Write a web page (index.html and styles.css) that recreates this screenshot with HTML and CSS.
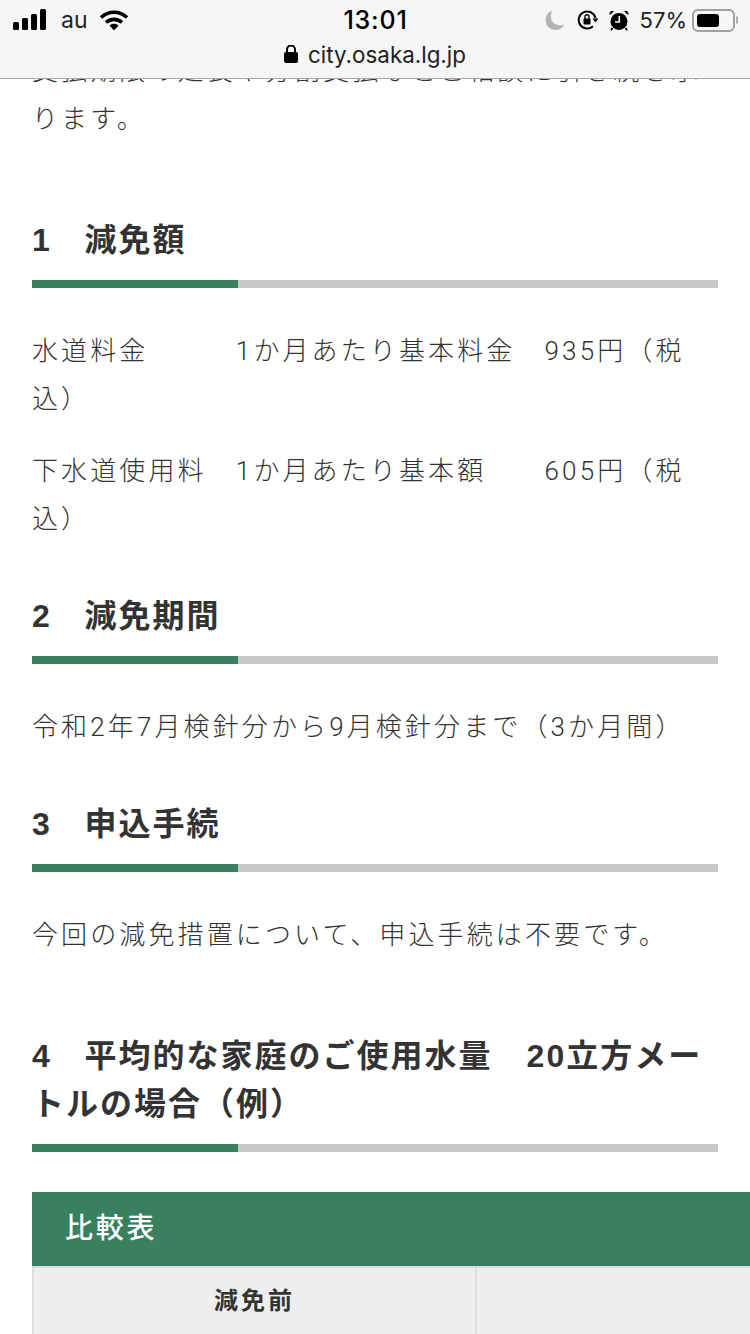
FILE: index.html
```html
<!DOCTYPE html>
<html lang="ja">
<head>
<meta charset="utf-8">
<title>city.osaka.lg.jp</title>
<link rel="stylesheet" href="styles.css">
</head>
<body>
<header class="browser-bar">
  <div class="status">
    <div class="status-left">
      <svg class="ic-signal" width="34" height="22" viewBox="0 0 34 22"><rect x="0" y="13" width="6" height="8" rx="1.5"/><rect x="9" y="9" width="6" height="12" rx="1.5"/><rect x="18" y="5" width="6" height="16" rx="1.5"/><rect x="27" y="0" width="6" height="21" rx="1.5"/></svg>
      <span class="carrier">au</span>
      <svg class="ic-wifi" width="30" height="22" viewBox="0 0 30 22"><path d="M2 8.500C9.500 1.500 20.500 1.500 28 8.500" fill="none" stroke="#000" stroke-width="3.600"/><path d="M7 13.500C11.500 9.300 18.500 9.300 23 13.500" fill="none" stroke="#000" stroke-width="3.600"/><path d="M10.500 16.500C13 14.300 17 14.300 19.500 16.500L15 21.500Z"/></svg>
    </div>
    <div class="clock">13:01</div>
    <div class="status-right">
      <svg class="ic-moon" width="20" height="20" viewBox="0 0 20 20"><path d="M7.500 0.500A10 10 0 1 0 19.500 14.500A9.500 9.500 0 0 1 7.500 0.500Z" fill="#b4b4b4"/></svg>
      <svg class="ic-rot" width="22" height="20" viewBox="0 0 22 20"><path d="M18.500 8A8.500 8.500 0 1 0 16 16.200" fill="none" stroke="#000" stroke-width="2"/><path d="M15.500 8.500H21.500L18.500 12.500Z"/><rect x="6.500" y="8.500" width="7" height="6" rx="1"/><path d="M8 9V6.800A2 2 0 0 1 12 6.800V9" fill="none" stroke="#000" stroke-width="1.400"/></svg>
      <svg class="ic-alarm" width="20" height="21" viewBox="0 0 20 21"><circle cx="10" cy="11.500" r="8.500"/><path d="M0.800 5L5 1.200A3 3 0 0 0 0.800 5ZM19.200 5L15 1.200A3 3 0 0 1 19.200 5Z"/><path d="M3.500 18L2 20.300M16.500 18L18 20.300" stroke="#000" stroke-width="1.800"/><path d="M10.300 6V12H6" fill="none" stroke="#f6f6f6" stroke-width="1.600"/></svg>
      <span class="percent">57%</span>
      <div class="battery"><div class="battery-level"></div></div>
      <div class="battery-nub"></div>
    </div>
  </div>
  <div class="address">
    <svg width="14" height="18" viewBox="0 0 14 18"><rect x="0" y="7" width="14" height="11" rx="2"/><path d="M3 8V4.500A4 4 0 0 1 11 4.500V8" fill="none" stroke="#000" stroke-width="2"/></svg>
    <span class="url">city.osaka.lg.jp</span>
  </div>
</header>

<main class="content">
  <p class="text">支払期限の延長や分割支払などご相談に引き続き承ります。</p>

  <h2 class="heading heading-far"><span class="num">1</span>　減免額</h2>
  <p class="text text-first">水道料金　　　1か月あたり基本料金　935円（税込）</p>
  <p class="text text-next">下水道使用料　1か月あたり基本額　　605円（税込）</p>

  <h2 class="heading"><span class="num">2</span>　減免期間</h2>
  <p class="text text-first">令和2年7月検針分から9月検針分まで（3か月間）</p>

  <h2 class="heading"><span class="num">3</span>　申込手続</h2>
  <p class="text text-first">今回の減免措置について、申込手続は不要です。</p>

  <h2 class="heading heading-far"><span class="num">4</span>　平均的な家庭のご使用水量　20立方メートルの場合（例）</h2>

  <table class="compare">
    <caption class="compare-title">比較表</caption>
    <thead>
      <tr>
        <th class="compare-cell">減免前</th>
        <th class="compare-cell"></th>
      </tr>
    </thead>
  </table>
</main>
</body>
</html>
```
FILE: styles.css
```css
html, body {
  margin: 0;
  padding: 0;
  height: 1334px;
  overflow: hidden;
  background: #fff;
}

body {
  font-family: "Liberation Sans", "Noto Sans CJK JP", sans-serif;
  color: #333;
}

.browser-bar {
  position: fixed;
  top: 0;
  left: 0;
  right: 0;
  height: 78px;
  background: #f6f6f6;
  border-bottom: 1px solid #a9a9a9;
  color: #000;
  font-family: "Inter", "Liberation Sans", sans-serif;
}

.status {
  display: grid;
  grid-template-columns: 1fr auto 1fr;
  align-items: center;
  height: 40px;
  padding: 0 12px 0 13px;
}

.status-left,
.status-right {
  display: flex;
  align-items: center;
}

.status-right {
  justify-content: flex-end;
}

.carrier {
  margin-left: 14px;
  font-size: 23px;
  font-weight: 400;
  color: #222;
}

.ic-wifi {
  margin-left: 11px;
}

.clock {
  font-size: 25px;
  font-weight: 500;
  letter-spacing: 0.8px;
}

.ic-rot {
  margin-left: 12px;
}

.ic-alarm {
  margin-left: 10px;
}

.percent {
  margin-left: 11px;
  font-size: 22px;
  color: #222;
}

.battery {
  box-sizing: border-box;
  width: 43px;
  height: 23px;
  margin-left: 5px;
  padding: 3px;
  border: 2px solid #a0a0a0;
  border-radius: 6px;
}

.battery-level {
  width: 22px;
  height: 100%;
  background: #000;
  border-radius: 3px;
}

.battery-nub {
  width: 2px;
  height: 8px;
  margin-left: 1px;
  background: #b0b0b0;
  border-radius: 0 2px 2px 0;
}

.address {
  display: flex;
  justify-content: center;
  align-items: center;
  gap: 10px;
  height: 28px;
}

.url {
  font-size: 22.4px;
  color: #222;
}

.content {
  padding: 47px 0 0 32px;
}

.text {
  width: 686px;
  margin: 0;
  font-family: "Roboto", "Noto Sans CJK JP", sans-serif;
  font-size: 26px;
  font-weight: 300;
  line-height: 48px;
  letter-spacing: 3.12px;
}

.text-first {
  margin-top: 39px;
}

.text-next {
  margin-top: 24px;
}

.heading {
  box-sizing: border-box;
  width: 686px;
  margin: 49px 0 0;
  padding-bottom: 24px;
  font-size: 32px;
  font-weight: 700;
  line-height: 48px;
  letter-spacing: 2px;
  background:
    linear-gradient(#398060, #398060) left bottom / 206px 8px no-repeat,
    linear-gradient(#c8c8c8, #c8c8c8) left bottom / 100% 8px no-repeat;
}

.heading-far {
  margin-top: 73px;
}

.num {
  letter-spacing: 0.8px;
}

.compare {
  width: 886px;
  margin-top: 40px;
  border-collapse: separate;
  border-spacing: 0;
  table-layout: fixed;
}

.compare-title {
  height: 74px;
  padding-left: 33px;
  background: #398060;
  color: #fff;
  font-size: 28px;
  font-weight: 500;
  line-height: 74px;
  letter-spacing: 2.8px;
  text-align: left;
}

.compare-cell {
  height: 80px;
  padding: 9px 0 23px;
  background: #eee;
  border-top: 2px solid #ddd;
  border-left: 2px solid #ddd;
  font-size: 24px;
  font-weight: 700;
  line-height: 48px;
  letter-spacing: 3px;
  text-align: center;
  vertical-align: top;
}
```
